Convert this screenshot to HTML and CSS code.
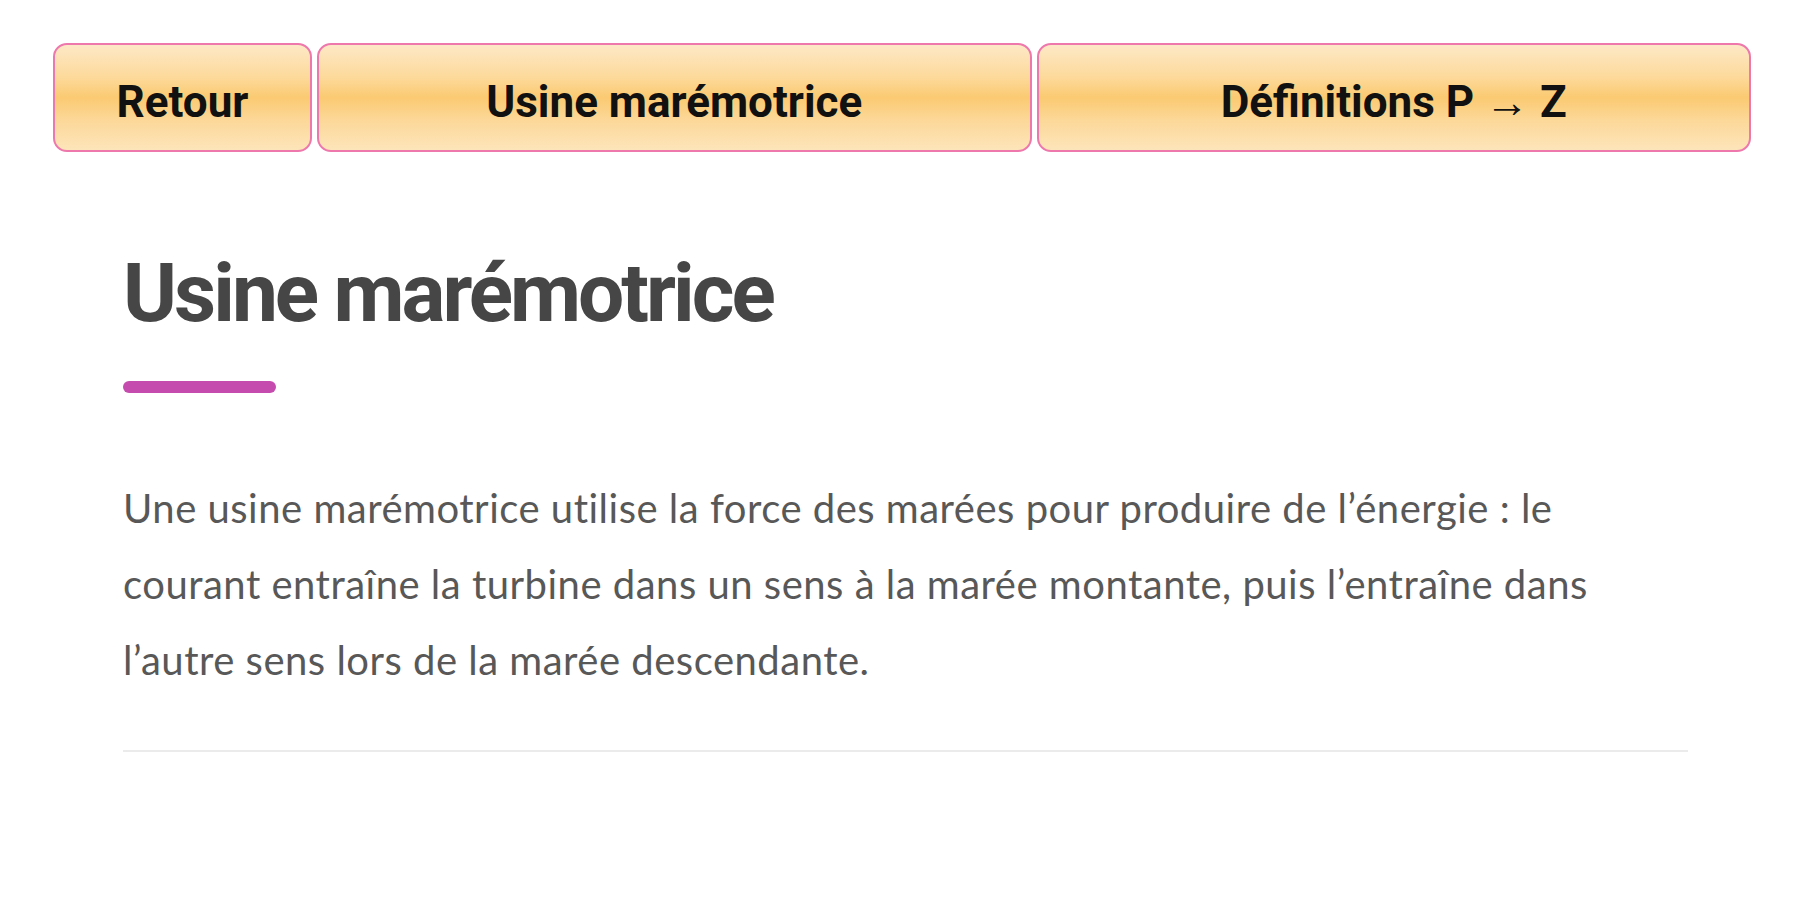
FILE: index.html
```html
<!DOCTYPE html>
<html lang="fr">
<head>
<meta charset="utf-8">
<title>Usine marémotrice</title>
<link rel="stylesheet" href="styles.css">
</head>
<body>
<div class="page">
  <nav class="nav">
    <a class="btn btn-back" href="#">Retour</a>
    <a class="btn btn-wide" href="#">Usine marémotrice</a>
    <a class="btn btn-wide" href="#">Définitions P → Z</a>
  </nav>
  <main class="content">
    <h1 class="title">Usine marémotrice</h1>
    <div class="title-bar"></div>
    <p class="text">Une usine marémotrice utilise la force des marées pour produire de l’énergie : le courant entraîne la turbine dans un sens à la marée montante, puis l’entraîne dans l’autre sens lors de la marée descendante.</p>
    <hr class="sep">
  </main>
</div>
</body>
</html>
```

FILE: styles.css
```css
html, body {
  margin: 0;
  padding: 0;
  background: #ffffff;
}

.page {
  padding: 43px 49px 0 53px;
}

.nav {
  display: flex;
  gap: 5px;
}

.btn {
  box-sizing: border-box;
  height: 109px;
  padding-top: 8px;
  display: flex;
  align-items: center;
  justify-content: center;
  border: 2.5px solid #ee78ac;
  border-radius: 14px;
  background: linear-gradient(to bottom, #fde8c6 0%, #fdda9c 30%, #fbca72 50%, #fcd899 72%, #fde5ba 100%);
  color: #111111;
  font-family: Roboto, "Liberation Sans", sans-serif;
  font-weight: 700;
  font-size: 44px;
  text-decoration: none;
}

.btn-back {
  width: 259px;
  flex: none;
}

.btn-wide {
  flex: 1;
}

.content {
  padding: 0 63px 0 70px;
}

.title {
  margin: 92px 0 0 0;
  font-family: Roboto, "Liberation Sans", sans-serif;
  font-weight: 700;
  font-size: 82px;
  line-height: 98px;
  letter-spacing: -3px;
  color: #464646;
}

.title-bar {
  margin-top: 39px;
  width: 153px;
  height: 12px;
  border-radius: 6px;
  background: #c64bae;
}

.text {
  margin: 77px 0 0 0;
  font-family: Lato, "Open Sans", sans-serif;
  font-size: 40px;
  letter-spacing: 0.5px;
  line-height: 76px;
  color: #585858;
}

.sep {
  margin: 52px 0 0 0;
  border: 0;
  height: 2px;
  background: #ebebeb;
}
```
